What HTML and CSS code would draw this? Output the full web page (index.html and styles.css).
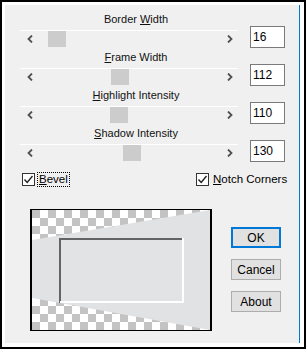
FILE: index.html
```html
<!DOCTYPE html>
<html lang="en">
<head>
    <meta charset="UTF-8">
    <title>Buttonize</title>
    <link rel="stylesheet" href="styles.css">
</head>
<body>

    <div class="window">
        <div class="panel">

            <!-- Slider rows -->
            <div class="slider-row">
                <div class="slider">
                    <div class="slider-label">Border <u>W</u>idth</div>
                    <div class="track">
                        <svg class="arrow arrow-left" width="6" height="8" viewBox="0 0 6 8"><path d="M5 0.5 L1.5 4 L5 7.5" /></svg>
                        <div class="thumb" style="left: 28px"></div>
                        <svg class="arrow arrow-right" width="6" height="8" viewBox="0 0 6 8"><path d="M1 0.5 L4.5 4 L1 7.5" /></svg>
                    </div>
                </div>
                <div class="value-box">16</div>
            </div>

            <div class="slider-row">
                <div class="slider">
                    <div class="slider-label"><u>F</u>rame Width</div>
                    <div class="track">
                        <svg class="arrow arrow-left" width="6" height="8" viewBox="0 0 6 8"><path d="M5 0.5 L1.5 4 L5 7.5" /></svg>
                        <div class="thumb" style="left: 91px"></div>
                        <svg class="arrow arrow-right" width="6" height="8" viewBox="0 0 6 8"><path d="M1 0.5 L4.5 4 L1 7.5" /></svg>
                    </div>
                </div>
                <div class="value-box">112</div>
            </div>

            <div class="slider-row">
                <div class="slider">
                    <div class="slider-label"><u>H</u>ighlight Intensity</div>
                    <div class="track">
                        <svg class="arrow arrow-left" width="6" height="8" viewBox="0 0 6 8"><path d="M5 0.5 L1.5 4 L5 7.5" /></svg>
                        <div class="thumb" style="left: 90px"></div>
                        <svg class="arrow arrow-right" width="6" height="8" viewBox="0 0 6 8"><path d="M1 0.5 L4.5 4 L1 7.5" /></svg>
                    </div>
                </div>
                <div class="value-box">110</div>
            </div>

            <div class="slider-row">
                <div class="slider">
                    <div class="slider-label"><u>S</u>hadow Intensity</div>
                    <div class="track">
                        <svg class="arrow arrow-left" width="6" height="8" viewBox="0 0 6 8"><path d="M5 0.5 L1.5 4 L5 7.5" /></svg>
                        <div class="thumb" style="left: 103px"></div>
                        <svg class="arrow arrow-right" width="6" height="8" viewBox="0 0 6 8"><path d="M1 0.5 L4.5 4 L1 7.5" /></svg>
                    </div>
                </div>
                <div class="value-box">130</div>
            </div>

            <!-- Checkboxes -->
            <div class="checks">
                <div class="check">
                    <span class="check-box"><svg width="11" height="11" viewBox="0 0 11 11"><path d="M1.5 5.5 L4.2 8.5 L9.5 2" /></svg></span>
                    <span class="check-label focused"><u>B</u>evel</span>
                </div>
                <div class="check">
                    <span class="check-box"><svg width="11" height="11" viewBox="0 0 11 11"><path d="M1.5 5.5 L4.2 8.5 L9.5 2" /></svg></span>
                    <span class="check-label"><u>N</u>otch Corners</span>
                </div>
            </div>

            <!-- Preview and buttons -->
            <div class="bottom">
                <div class="preview">
                    <svg width="178" height="120" viewBox="0 0 178 120">
                        <defs>
                            <pattern id="checker" width="16" height="16" patternUnits="userSpaceOnUse">
                                <rect width="16" height="16" fill="#ffffff" />
                                <rect width="8" height="8" fill="#c3c3c3" />
                                <rect x="8" y="8" width="8" height="8" fill="#c3c3c3" />
                            </pattern>
                        </defs>
                        <rect width="178" height="120" fill="url(#checker)" />
                        <polygon points="0,30 178,0 178,120 0,88" fill="#e1e2e4" />
                        <rect x="27" y="28" width="125" height="65" fill="#e2e3e5" />
                        <path d="M28 93 V29 H152" fill="none" stroke="#646464" stroke-width="2" />
                        <path d="M28 92 H151 V28" fill="none" stroke="#ffffff" stroke-width="2" />
                    </svg>
                </div>
                <div class="buttons">
                    <button class="btn btn-default">OK</button>
                    <button class="btn">Cancel</button>
                    <button class="btn">About</button>
                </div>
            </div>

        </div>
    </div>

</body>
</html>
```

FILE: styles.css
```css
body {
    margin: 0;
    padding: 0;
    background-color: #ffffff;
    font-family: 'Liberation Sans', Arial, sans-serif;
    font-size: 11px;
    color: #000000;
}

.window {
    width: 306px;
    height: 349px;
    box-sizing: border-box;
    border: 2px solid #000000;
    padding: 3px 4px 4px 3px;
    background-color: #ffffff;
}

.panel {
    height: 100%;
    box-sizing: border-box;
    background-color: #f0f0f0;
    border-right: 1px solid #0078d7; /* Blue edge */
    padding: 6px 0 0 15px;
}

/* Slider rows */
.slider-row {
    display: grid;
    grid-template-columns: 218px 35px;
    column-gap: 12px;
    height: 38px;
    align-items: start;
}

.slider-label {
    height: 16px;
    line-height: 17px;
    text-align: center;
    padding-left: 14px;
    color: #111111;
}

.track {
    position: relative;
    height: 21px;
    box-sizing: border-box;
    padding-top: 3px;
}

.track::before {
    content: "";
    display: block;
    height: 1px;
    background-color: #ffffff;
}

.thumb {
    position: absolute;
    top: 4px;
    width: 18px;
    height: 16px;
    background-color: #cccccc;
}

.arrow {
    position: absolute;
    top: 8px;
}

.arrow path {
    fill: none;
    stroke: #505050;
    stroke-width: 1.8;
}

.arrow-left {
    left: 7px;
}

.arrow-right {
    left: 207px;
}

.value-box {
    margin-top: 15px;
    height: 22px;
    box-sizing: border-box;
    border: 1px solid #7a7a7a;
    background-color: #ffffff;
    padding: 3px 0 0 2px;
    font-size: 12px;
    line-height: 14px;
}

/* Checkboxes */
.checks {
    display: grid;
    grid-template-columns: 174px auto;
    margin-top: 9px;
    padding-left: 2px;
    height: 15px;
}

.check {
    display: flex;
    align-items: center;
    height: 15px;
}

.check-box {
    width: 13px;
    height: 13px;
    box-sizing: border-box;
    border: 1px solid #333333;
    background-color: #ffffff;
    display: flex;
}

.check-box path {
    fill: none;
    stroke: #222222;
    stroke-width: 1.4;
}

.check-label {
    margin-left: 3px;
    font-size: 11.5px;
    line-height: 13px;
    padding: 0 1px;
}

.check-label.focused {
    outline: 1px dotted #000000;
}

/* Preview and buttons */
.bottom {
    display: flex;
    margin-top: 22px;
}

.preview {
    margin-left: 10px;
    width: 178px;
    height: 120px;
    border: 1px solid #000000;
    border-left-width: 2px;
    border-right-width: 2px;
}

.preview svg {
    display: block;
}

.buttons {
    display: flex;
    flex-direction: column;
    gap: 11px;
    margin-left: 19px;
    margin-top: 18px;
}

.btn {
    width: 50px;
    height: 21px;
    box-sizing: border-box;
    border: 1px solid #adadad;
    background-color: #e1e1e1;
    font-family: 'Liberation Sans', Arial, sans-serif;
    font-size: 12px;
    color: #000000;
    padding: 0;
    cursor: pointer;
}

.btn-default {
    border: 2px solid #0078d7;
}
```
